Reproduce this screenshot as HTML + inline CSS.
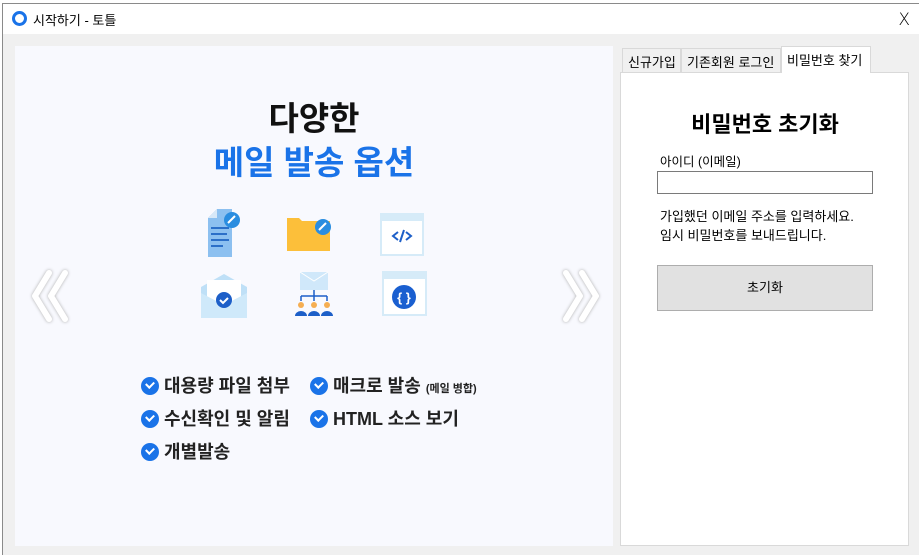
<!DOCTYPE html>
<html><head><meta charset="utf-8"><style>
*{margin:0;padding:0;box-sizing:border-box}
body{width:919px;height:555px;background:#fff;position:relative;overflow:hidden;font-family:"Liberation Sans","Noto Sans CJK KR",sans-serif}
.win{position:absolute;left:2px;top:3px;right:0;bottom:0;border-left:1px solid #8a8a8a;border-top:1px solid #8a8a8a;background:#f0f0f0}
.title{position:absolute;left:0;top:0;right:0;height:30px;background:#fff;font-size:13px;color:#000}
.title .t{position:absolute;left:30px;top:6px}
.title .x{position:absolute;right:9px;top:6px;font-size:17px;font-family:"DejaVu Sans",sans-serif;font-weight:300}
.circ{position:absolute;left:9px;top:7px;width:15px;height:15px;border:3px solid #1a73e8;border-radius:50%}
.left{position:absolute;left:15px;top:46px;width:598px;height:500px;background:#f8f9fe}
.h1{position:absolute;left:0;width:598px;text-align:center;font-weight:700;font-size:33px}
.feat{position:absolute;font-size:18px;font-weight:700;color:#222;white-space:nowrap}
.chk{display:inline-block;width:18px;height:18px;border-radius:50%;background:#1a73e8;vertical-align:-3px;margin-right:5px;position:relative}
.chk:after{content:"";position:absolute;left:5px;top:4px;width:6px;height:4px;border-left:2px solid #fff;border-bottom:2px solid #fff;transform:rotate(-45deg)}
.tab{position:absolute;top:48px;height:24px;border:1px solid #d9d9d9;border-bottom:none;background:#f0f0f0;font-size:13px;padding:3px 5px 0;white-space:nowrap}
.panel{position:absolute;left:620px;top:72px;width:289px;height:474px;background:#fff;border:1px solid #d9d9d9}
</style></head><body>
<div class="win">
<div class="title"><div class="circ"></div><span class="t">시작하기 - 토틀</span><span class="x">X</span></div>
</div>
<div class="left">
 <div class="h1" style="top:46px;color:#111">다양한</div>
 <div class="h1" style="top:90px;color:#1a73e8">메일 발송 옵션</div>
 <svg style="position:absolute;left:0;top:0" width="598" height="300">
  <g fill="none" stroke="#fff" stroke-width="6" stroke-linecap="round" stroke-linejoin="round" style="filter:drop-shadow(0 0 1.5px #aaa)">
   <path d="M34 227 L20 250 L34 273"/><path d="M50 227 L36 250 L50 273"/>
   <path d="M551 227 L565 250 L551 273"/><path d="M567 227 L581 250 L567 273"/>
  </g>
  <path d="M193 172 L202 163 L217 163 L217 211 L193 211 Z" fill="#8cc0f0"/>
  <path d="M193 172 L202 172 L202 163 Z" fill="#d7e8f8"/>
  <g stroke="#2b6fc8" stroke-width="2"><path d="M196 182h18M196 188h16M196 194h18M196 200h12"/></g>
  <circle cx="217" cy="174" r="8" fill="#2a8de0"/><path d="M213 177l7-7" stroke="#fff" stroke-width="2"/>
  <path d="M272 172h12l3 3h28v30h-43z" fill="#fcbf3a"/>
  <circle cx="308" cy="181" r="8" fill="#2a8de0"/><path d="M304 184l7-7" stroke="#fff" stroke-width="2"/>
  <rect x="365" y="167" width="44" height="43" fill="#d6ebf8"/><rect x="367" y="175" width="40" height="33" fill="#fff"/>
  <path d="M383 186l-5 4 5 4M391 186l5 4-5 4M389 184l-4 12" stroke="#1d5fc8" stroke-width="2" fill="none"/>
  <path d="M186 241l23-13 23 13v31h-46z" fill="#bfe0f7"/><rect x="192" y="234" width="34" height="22" fill="#fff"/>
  <path d="M186 247l23 12 23-12v25h-46z" fill="#cfe9fa"/>
  <circle cx="209" cy="254" r="8" fill="#1d5fc8"/><path d="M205 254l3 3 5-5" stroke="#fff" stroke-width="2" fill="none"/>
  <rect x="285" y="226" width="28" height="18" fill="#d0e8fa"/><path d="M285 226l14 9 14-9" stroke="#fff" fill="none"/>
  <path d="M299 244v6M286 250h26M286 250v5M299 250v5M312 250v5" stroke="#1d5fc8" stroke-width="1.5" fill="none"/>
  <g fill="#f5ae52"><circle cx="286" cy="259" r="3"/><circle cx="299" cy="259" r="3"/><circle cx="312" cy="259" r="3"/></g>
  <g fill="#1d5fc8"><path d="M280 270a6 5 0 0 1 12 0z"/><path d="M293 270a6 5 0 0 1 12 0z"/><path d="M306 270a6 5 0 0 1 12 0z"/></g>
  <rect x="367" y="225" width="45" height="45" fill="#d6ebf8"/><rect x="369" y="233" width="41" height="35" fill="#fff"/>
  <circle cx="389" cy="251" r="12" fill="#1a5fd0"/>
  <text x="389" y="256" fill="#fff" font-size="13" font-weight="700" text-anchor="middle" font-family="Liberation Sans">{ }</text>
 </svg>
 <div class="feat" style="left:126px;top:326px"><span class="chk"></span>대용량 파일 첨부</div>
 <div class="feat" style="left:295px;top:326px"><span class="chk"></span>매크로 발송 <span style="font-size:11px">(메일 병합)</span></div>
 <div class="feat" style="left:126px;top:359px"><span class="chk"></span>수신확인 및 알림</div>
 <div class="feat" style="left:295px;top:359px"><span class="chk"></span>HTML 소스 보기</div>
 <div class="feat" style="left:126px;top:392px"><span class="chk"></span>개별발송</div>
</div>
<div class="tab" style="left:622px;width:59px">신규가입</div>
<div class="tab" style="left:681px;width:100px">기존회원 로그인</div>
<div class="panel"></div>
<div class="tab" style="left:781px;top:46px;height:27px;width:90px;background:#fff;z-index:2">비밀번호 찾기</div>
<div style="position:absolute;left:621px;width:288px;top:107px;text-align:center;font-size:22px;font-weight:700">비밀번호 초기화</div>
<div style="position:absolute;left:660px;top:151px;font-size:12.5px">아이디 (이메일)</div>
<div style="position:absolute;left:657px;top:171px;width:216px;height:23px;border:1px solid #7a7a7a;background:#fff"></div>
<div style="position:absolute;left:660px;top:207px;font-size:13px;line-height:19px">가입했던 이메일 주소를 입력하세요.<br>임시 비밀번호를 보내드립니다.</div>
<div style="position:absolute;left:657px;top:265px;width:216px;height:46px;border:1px solid #adadad;background:#e1e1e1;font-size:13px;text-align:center;line-height:44px">초기화</div>
</body></html>
